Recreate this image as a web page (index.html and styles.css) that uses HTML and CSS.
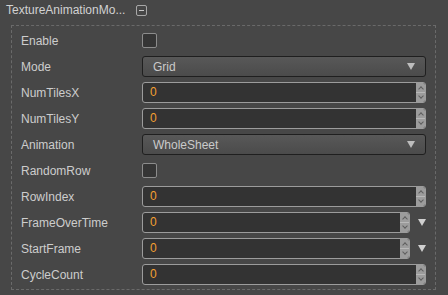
FILE: index.html
```html
<!DOCTYPE html>
<html lang="en">
<head>
    <meta charset="UTF-8">
    <title>Texture Animation Module</title>
    <link rel="stylesheet" href="styles.css">
</head>
<body>
    <div class="panel-header">
        <span class="panel-title">TextureAnimationMo...</span>
        <span class="collapse-btn"></span>
    </div>

    <!-- Propiedades del modulo -->
    <div class="prop-box">
        <div class="prop-row">
            <label>Enable</label>
            <div class="field"><span class="checkbox"></span></div>
        </div>
        <div class="prop-row">
            <label>Mode</label>
            <div class="field"><div class="select"><span>Grid</span><span class="arrow"></span></div></div>
        </div>
        <div class="prop-row">
            <label>NumTilesX</label>
            <div class="field"><div class="number"><span class="value">0</span><span class="spin"><i class="up"></i><i class="down"></i></span></div></div>
        </div>
        <div class="prop-row">
            <label>NumTilesY</label>
            <div class="field"><div class="number"><span class="value">0</span><span class="spin"><i class="up"></i><i class="down"></i></span></div></div>
        </div>
        <div class="prop-row">
            <label>Animation</label>
            <div class="field"><div class="select"><span>WholeSheet</span><span class="arrow"></span></div></div>
        </div>
        <div class="prop-row">
            <label>RandomRow</label>
            <div class="field"><span class="checkbox"></span></div>
        </div>
        <div class="prop-row">
            <label>RowIndex</label>
            <div class="field"><div class="number"><span class="value">0</span><span class="spin"><i class="up"></i><i class="down"></i></span></div></div>
        </div>
        <div class="prop-row">
            <label>FrameOverTime</label>
            <div class="field">
                <div class="number"><span class="value">0</span><span class="spin"><i class="up"></i><i class="down"></i></span></div>
                <span class="curve-arrow"></span>
            </div>
        </div>
        <div class="prop-row">
            <label>StartFrame</label>
            <div class="field">
                <div class="number"><span class="value">0</span><span class="spin"><i class="up"></i><i class="down"></i></span></div>
                <span class="curve-arrow"></span>
            </div>
        </div>
        <div class="prop-row">
            <label>CycleCount</label>
            <div class="field"><div class="number"><span class="value">0</span><span class="spin"><i class="up"></i><i class="down"></i></span></div></div>
        </div>
    </div>
</body>
</html>
```

FILE: styles.css
```css
body {
    font-family: "Liberation Sans", Arial, sans-serif;
    font-size: 12px;
    background-color: #474747;
    color: #cfcfcf;
    margin: 0;
    padding: 0;
}
.panel-header {
    display: flex;
    align-items: center;
    height: 20px;
    padding-left: 6px;
}
.panel-title {
    color: #d2d2d2;
}
.collapse-btn {
    position: relative;
    width: 9px;
    height: 9px;
    margin-left: 11px;
    margin-top: 1px;
    border: 1px solid #a8a8a8;
    border-radius: 2px;
}
.collapse-btn::after {
    content: "";
    position: absolute;
    left: 2px;
    right: 2px;
    top: 4px;
    height: 1px;
    background-color: #c8c8c8;
}
.prop-box {
    margin: 5px 12px 0 11px;
    padding: 4px 9px 4px 9px;
    border: 1px dashed #6a6a6a;
    display: flex;
    flex-direction: column;
    gap: 5px;
}
.prop-row {
    display: grid;
    grid-template-columns: 121px 1fr;
    align-items: center;
    height: 21px;
}
.prop-row label {
    color: #cdcdcd;
}
.field {
    display: flex;
    align-items: center;
    height: 100%;
}
.checkbox {
    width: 13px;
    height: 13px;
    background-color: #353535;
    border: 1px solid #8c8c8c;
    border-radius: 2px;
}
.select {
    flex: 1;
    height: 21px;
    box-sizing: border-box;
    display: flex;
    align-items: center;
    justify-content: space-between;
    padding: 0 10px 0 10px;
    background: linear-gradient(#585858, #4b4b4b);
    border: 1px solid #1f1f1f;
    border-radius: 3px;
    color: #cacaca;
}
.arrow {
    width: 0;
    height: 0;
    border-left: 4px solid transparent;
    border-right: 4px solid transparent;
    border-top: 7px solid #bdbdbd;
    margin-right: 0;
}
.number {
    flex: 1;
    height: 21px;
    box-sizing: border-box;
    display: flex;
    background-color: #333;
    border: 1px solid #9c9c9c;
    border-radius: 3px;
    overflow: hidden;
}
.number .value {
    flex: 1;
    padding-left: 7px;
    line-height: 19px;
    color: #f4a031;
}
.spin {
    width: 9px;
    display: flex;
    flex-direction: column;
    background-color: #9c9c9c;
}
.spin i {
    flex: 1;
    position: relative;
}
.spin .up {
    border-bottom: 1px solid #b8b8b8;
}
.spin i::after {
    content: "";
    position: absolute;
    left: 3px;
    width: 3px;
    height: 3px;
    border-left: 1px solid #5e5e5e;
    border-top: 1px solid #5e5e5e;
}
.spin .up::after {
    top: 4px;
    transform: rotate(45deg);
}
.spin .down::after {
    top: 1px;
    transform: rotate(-135deg);
}
.curve-arrow {
    width: 0;
    height: 0;
    margin-left: 8px;
    border-left: 4px solid transparent;
    border-right: 4px solid transparent;
    border-top: 7px solid #d0d0d0;
}
```
